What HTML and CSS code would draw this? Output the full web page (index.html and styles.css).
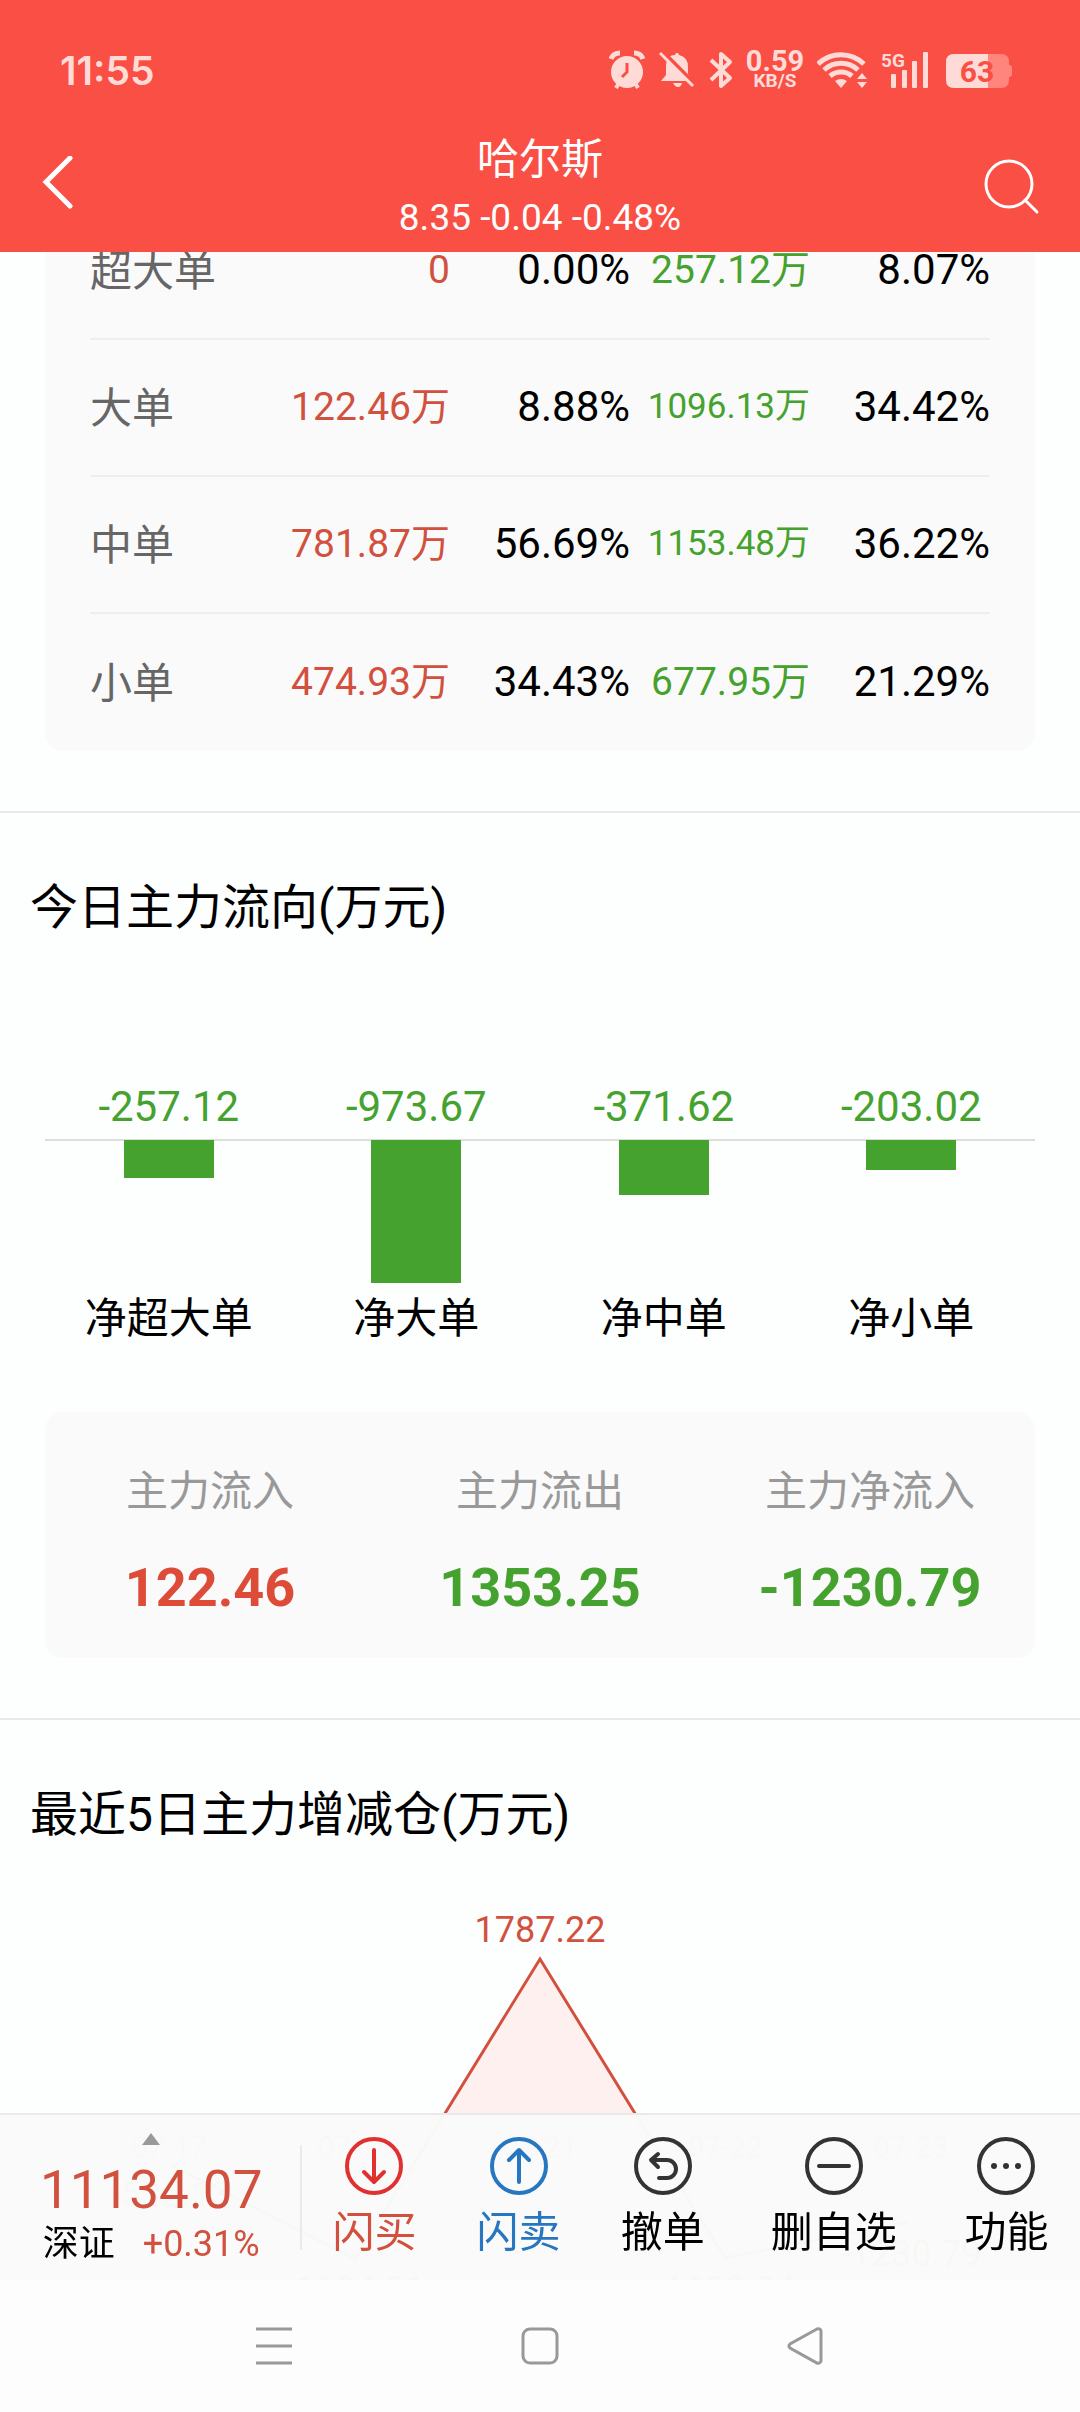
FILE: index.html
```html
<!DOCTYPE html>
<html lang="zh-CN">
<head>
    <meta charset="UTF-8">
    <meta name="viewport" content="width=device-width, initial-scale=1">
    <title>哈尔斯</title>
    <link rel="stylesheet" href="styles.css">
</head>
<body>

<header class="header">
    <div class="status">
        <span class="time">11:55</span>
        <div class="status-icons">
            <svg width="36" height="40" viewBox="0 0 36 40">
                <circle cx="18" cy="22" r="16" fill="currentColor"/>
                <path d="M2 9Q4 3 11 3M34 9Q32 3 25 3" fill="none" stroke="currentColor" stroke-width="5"/>
                <path d="M10 33l-3 5M26 33l3 5" stroke="currentColor" stroke-width="4"/>
                <path d="M18 13v9l-5 5" fill="none" stroke="#fa4f45" stroke-width="3"/>
            </svg>
            <svg width="36" height="40" viewBox="0 0 36 40">
                <path d="M2 31l5-6V17Q7 5 16 5q0-2 2-2t2 2q9 2 9 12v7l4 7z" fill="currentColor"/>
                <path d="M14 33h9q-1 4-4 4t-5-4z" fill="currentColor"/>
                <path d="M4 2l33 33" stroke="#fa4f45" stroke-width="4"/>
                <path d="M1 3l33 33" stroke="currentColor" stroke-width="3"/>
            </svg>
            <svg width="24" height="40" viewBox="0 0 24 40">
                <path d="M2 10l19 18-9 8V4l9 8L2 30" fill="none" stroke="currentColor" stroke-width="4" stroke-linejoin="round"/>
            </svg>
            <div class="speed"><b>0.59</b><small>KB/S</small></div>
            <svg width="50" height="40" viewBox="0 0 50 40">
                <g fill="none" stroke="currentColor" stroke-width="5">
                    <path d="M1 14a33 33 0 0 1 46 0"/>
                    <path d="M7 20a25 25 0 0 1 34 0"/>
                    <path d="M13 26a17 17 0 0 1 22 0"/>
                </g>
                <path d="M18 31q6-4 12 0l-6 7zM40 29l5-6 5 6zM40 32l5 6 5-6z" fill="currentColor"/>
            </svg>
            <svg width="51" height="40" viewBox="0 0 51 40" fill="currentColor">
                <text class="net" x="0" y="17">5G</text>
                <rect x="10" y="24" width="5" height="14" rx="1"/>
                <rect x="21" y="20" width="5" height="18" rx="1"/>
                <rect x="31" y="11" width="5" height="27" rx="1"/>
                <rect x="42" y="2" width="5" height="36" rx="1"/>
            </svg>
            <svg width="66" height="40" viewBox="0 0 66 40">
                <path d="M42 4h13q8 0 8 8v3q3 0 3 3v6q0 3-3 3v3q0 8-8 8H42z" fill="#ff857d"/>
                <path d="M42 4H8q-8 0-8 8v18q0 8 8 8h34z" fill="currentColor"/>
                <text class="level" x="31" y="32">63</text>
            </svg>
        </div>
    </div>
    <div class="navbar">
        <button class="icon-btn" aria-label="返回">
            <svg width="68" height="60" viewBox="0 0 68 60">
                <path d="M42 2L18 26l24 24" fill="none" stroke="#fff" stroke-width="5" stroke-linecap="round"/>
            </svg>
        </button>
        <div class="stock">
            <h1>哈尔斯</h1>
            <p>8.35 -0.04 -0.48%</p>
        </div>
        <button class="icon-btn" aria-label="搜索">
            <svg width="68" height="60" viewBox="0 0 68 60">
                <g fill="none" stroke="#fff" stroke-width="3" stroke-linecap="round">
                    <circle cx="25" cy="28" r="23"/>
                    <path d="M41 44l12 12"/>
                </g>
            </svg>
        </button>
    </div>
</header>

<main class="content">
    <section class="section orders">
        <table class="card">
            <tr>
                <th scope="row">超大单</th>
                <td class="red">0</td>
                <td class="rate">0.00%</td>
                <td class="green">257.12万</td>
                <td class="rate">8.07%</td>
            </tr>
            <tr>
                <th scope="row">大单</th>
                <td class="red">122.46万</td>
                <td class="rate">8.88%</td>
                <td class="green long">1096.13万</td>
                <td class="rate">34.42%</td>
            </tr>
            <tr>
                <th scope="row">中单</th>
                <td class="red">781.87万</td>
                <td class="rate">56.69%</td>
                <td class="green long">1153.48万</td>
                <td class="rate">36.22%</td>
            </tr>
            <tr>
                <th scope="row">小单</th>
                <td class="red">474.93万</td>
                <td class="rate">34.43%</td>
                <td class="green">677.95万</td>
                <td class="rate">21.29%</td>
            </tr>
        </table>
    </section>

    <section class="section">
        <h2>今日主力流向(万元)</h2>
        <div class="bars">
            <div class="col">
                <span class="value">-257.12</span>
                <div class="plot"><div class="bar" style="height: 38px"></div></div>
                <span class="label">净超大单</span>
            </div>
            <div class="col">
                <span class="value">-973.67</span>
                <div class="plot"><div class="bar" style="height: 143px"></div></div>
                <span class="label">净大单</span>
            </div>
            <div class="col">
                <span class="value">-371.62</span>
                <div class="plot"><div class="bar" style="height: 55px"></div></div>
                <span class="label">净中单</span>
            </div>
            <div class="col">
                <span class="value">-203.02</span>
                <div class="plot"><div class="bar" style="height: 30px"></div></div>
                <span class="label">净小单</span>
            </div>
        </div>
        <dl class="summary">
            <div>
                <dt>主力流入</dt>
                <dd class="red">122.46</dd>
            </div>
            <div>
                <dt>主力流出</dt>
                <dd class="green">1353.25</dd>
            </div>
            <div>
                <dt>主力净流入</dt>
                <dd class="green">-1230.79</dd>
            </div>
        </dl>
    </section>

    <section class="section">
        <h2>最近5日主力增减仓(万元)</h2>
        <svg class="trend" viewBox="0 0 1080 470">
            <path d="M444 268L540 112 636 268z" fill="#fdf0ee"/>
            <path d="M444 268L540 112 636 268" fill="none" stroke="#d2503e" stroke-width="3"/>
            <path d="M171 318L355 412 444 268M636 268L725 411 908 375" fill="none" stroke="#46a22e" stroke-width="3"/>
            <g class="amount">
                <text class="up" x="540" y="95">1787.22</text>
                <text x="171" y="360">-535.13</text>
                <text x="355" y="455">-1694.91</text>
                <text x="725" y="455">-1698.04</text>
                <text x="911" y="419">-1230.79</text>
            </g>
            <g class="date">
                <text x="169" y="310">07-17</text>
                <text x="355" y="310">07-18</text>
                <text x="540" y="310">07-21</text>
                <text x="725" y="310">07-22</text>
                <text x="911" y="310">07-23</text>
            </g>
        </svg>
    </section>
</main>

<footer class="footer">
    <div class="toolbar">
        <a class="index" href="#index">
            <svg width="18" height="12" viewBox="0 0 18 12"><path d="M9 0l9 12H0z" fill="#999"/></svg>
            <span class="point">11134.07</span>
            <span class="change"><span class="name">深证</span>+0.31%</span>
        </a>
        <div class="divider"></div>
        <div class="actions">
            <button class="buy">
                <svg width="60" height="60" viewBox="0 0 60 60">
                    <circle cx="30" cy="30" r="27"/>
                    <path d="M30 14v31M20 36l10 10 10-10"/>
                </svg>
                闪买
            </button>
            <button class="sell">
                <svg width="60" height="60" viewBox="0 0 60 60">
                    <circle cx="30" cy="30" r="27"/>
                    <path d="M30 46V15M20 24l10-10 10 10"/>
                </svg>
                闪卖
            </button>
            <button>
                <svg width="60" height="60" viewBox="0 0 60 60">
                    <circle cx="30" cy="30" r="27"/>
                    <path d="M26 42h8a9 9 0 0 0 0-18H19M25 18l-7 6 7 7"/>
                </svg>
                撤单
            </button>
            <button>
                <svg width="60" height="60" viewBox="0 0 60 60">
                    <circle cx="30" cy="30" r="27"/>
                    <path d="M15 30h30"/>
                </svg>
                删自选
            </button>
            <button>
                <svg width="60" height="60" viewBox="0 0 60 60">
                    <circle cx="30" cy="30" r="27"/>
                    <g fill="#333" stroke="none">
                        <circle cx="18" cy="30" r="3"/>
                        <circle cx="30" cy="30" r="3"/>
                        <circle cx="42" cy="30" r="3"/>
                    </g>
                </svg>
                功能
            </button>
        </div>
    </div>
    <nav class="system">
        <button aria-label="最近任务">
            <svg width="40" height="40" viewBox="0 0 40 40"><path d="M2 3h36M2 20h36M2 37h36"/></svg>
        </button>
        <button aria-label="主屏幕">
            <svg width="40" height="40" viewBox="0 0 40 40"><rect x="3" y="3" width="34" height="34" rx="7"/></svg>
        </button>
        <button aria-label="后退">
            <svg width="40" height="40" viewBox="0 0 40 40"><path d="M31 3L4 18q-2 2 0 4l27 15q3 1 4-2V5q-1-3-4-2z"/></svg>
        </button>
    </nav>
</footer>

</body>
</html>
```
FILE: styles.css
```css
* {
    box-sizing: border-box;
    margin: 0;
    padding: 0;
}

body {
    font-family: Roboto, 'Noto Sans CJK SC', sans-serif;
    background-color: #fdfefe;
    color: #000;
    height: 100vh;
    display: flex;
    flex-direction: column;
    overflow: hidden;
}

button {
    background: none;
    border: none;
    font: inherit;
    color: inherit;
}

svg {
    display: block;
}

.red {
    color: #d2503e;
}

.green {
    color: #46a22e;
}

/* header */
.header {
    background-color: #fa4f45;
    color: #fff;
    padding-top: 40px;
}

.status {
    display: flex;
    justify-content: space-between;
    align-items: center;
    height: 60px;
    padding: 0 68px 0 60px;
    color: #ffdbd8;
}

.time {
    font-family: Inter, sans-serif;
    font-size: 39px;
    font-weight: 600;
}

.status-icons {
    display: flex;
    align-items: center;
    gap: 14px;
}

.speed {
    width: 56px;
    display: flex;
    flex-direction: column;
    align-items: center;
}

.speed b {
    font-size: 29px;
    line-height: 22px;
}

.speed small {
    font-size: 19px;
    font-weight: bold;
    line-height: 18px;
}

.net {
    font-size: 19px;
    font-weight: bold;
}

.level {
    font-size: 30px;
    font-weight: bold;
    fill: #fa4f45;
    text-anchor: middle;
}

.navbar {
    display: flex;
    justify-content: space-between;
    align-items: center;
    padding: 28px 28px 8px;
}

.stock {
    text-align: center;
}

.stock h1 {
    font-size: 42px;
    font-weight: normal;
    line-height: 64px;
}

.stock p {
    font-size: 37px;
    line-height: 52px;
}

/* content */
.content {
    flex: 1;
    overflow: hidden;
}

.section + .section {
    border-top: 2px solid #e8e9e9;
}

.orders {
    margin-top: -49px;
    padding: 0 45px 60px;
}

.card {
    display: block;
    background-color: #fafafa;
    border-radius: 18px;
    padding: 0 45px;
}

.card tbody {
    display: block;
}

.card tr {
    display: grid;
    grid-template-columns: 150fr 210fr 180fr 180fr 180fr;
    align-items: center;
    height: 137px;
    border-bottom: 2px solid #eee;
}

.card tr:last-child {
    border-bottom: none;
}

.card th {
    font-size: 42px;
    font-weight: normal;
    line-height: 50px;
    padding-top: 3px;
    text-align: left;
    color: #666;
}

.card td {
    font-size: 39px;
    line-height: 50px;
    padding-bottom: 2px;
    text-align: right;
}

.card .rate {
    font-size: 42px;
}

.card .long {
    font-size: 35px;
}

h2 {
    font-size: 48px;
    font-weight: normal;
    line-height: 64px;
    padding: 63px 30px 0;
}

.bars {
    display: flex;
    margin: 142px 45px 0;
}

.col {
    flex: 1;
    text-align: center;
    font-size: 42px;
    line-height: 50px;
}

.value {
    display: block;
    color: #46a22e;
    padding-bottom: 7px;
}

.plot {
    height: 155px;
    border-top: 2px solid #ddd;
}

.bar {
    width: 90px;
    margin: -1px auto 0;
    background-color: #46a22e;
}

.label {
    display: block;
}

.summary {
    display: flex;
    margin: 68px 45px 60px;
    padding: 55px 0 38px;
    background-color: #fafafa;
    border-radius: 18px;
    text-align: center;
}

.summary div {
    flex: 1;
}

.summary dt {
    font-size: 42px;
    line-height: 50px;
    color: #999;
}

.summary dd {
    font-size: 54px;
    font-weight: bold;
    line-height: 64px;
    margin-top: 39px;
}

.summary .red {
    color: #dc4c38;
}

.trend {
    width: 100%;
}

.trend text {
    text-anchor: middle;
}

.amount {
    font-size: 36px;
    fill: #46a22e;
}

.amount .up {
    fill: #d2503e;
}

.date {
    font-size: 30px;
    fill: #999;
}

/* footer */
.footer {
    position: fixed;
    left: 0;
    right: 0;
    bottom: 0;
}

.toolbar {
    display: flex;
    align-items: center;
    background-color: rgba(250, 250, 250, 0.98);
    border-top: 2px solid #eaeaea;
}

.index {
    width: 28%;
    display: flex;
    flex-direction: column;
    align-items: center;
    padding-top: 6px;
    color: #d2503e;
    text-decoration: none;
}

.point {
    font-size: 53px;
    line-height: 60px;
    margin-top: 15px;
}

.change {
    font-size: 36px;
    line-height: 48px;
}

.name {
    color: #000;
    margin-right: 28px;
}

.divider {
    width: 2px;
    height: 105px;
    margin-left: -2px;
    background-color: #eaeaea;
}

.actions {
    flex: 1;
    display: grid;
    grid-template-columns: 144fr 144fr 144fr 198fr 147fr;
}

.actions button {
    display: flex;
    flex-direction: column;
    align-items: center;
    gap: 12px;
    padding: 21px 0 22px;
    font-size: 42px;
    line-height: 50px;
    white-space: nowrap;
}

.actions svg {
    fill: none;
    stroke: #333;
    stroke-width: 4;
    stroke-linecap: round;
    stroke-linejoin: round;
}

.actions .buy {
    color: #d2503e;
}

.actions .buy svg {
    stroke: #e03130;
}

.actions .sell {
    color: #2676c0;
}

.actions .sell svg {
    stroke: #2676c0;
}

.system {
    display: grid;
    grid-template-columns: repeat(3, 1fr);
    place-items: center;
    height: 132px;
    padding: 0 13%;
    background-color: #fdfdfd;
}

.system svg {
    fill: none;
    stroke: #999;
    stroke-width: 3;
}
```
